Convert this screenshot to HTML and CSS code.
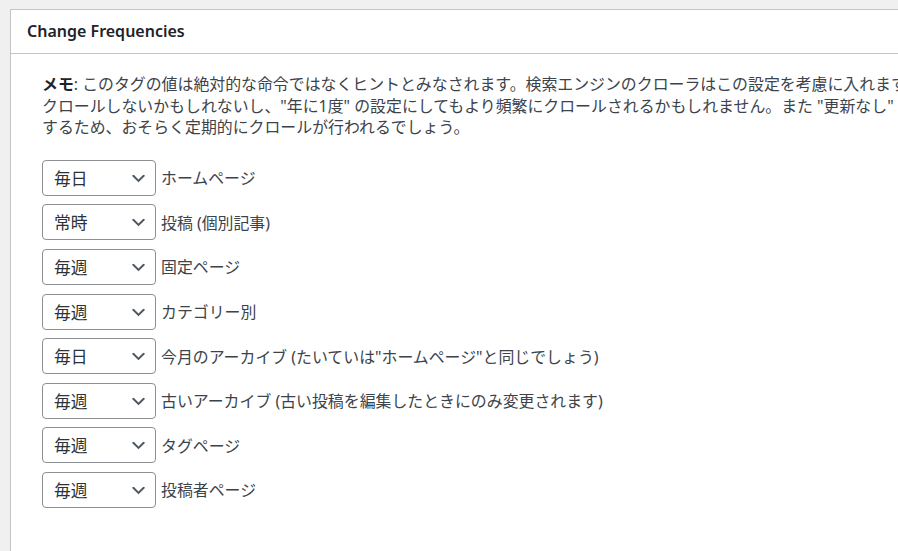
FILE: index.html
```html
<!DOCTYPE html>
<html lang="ja">
<head>
    <meta charset="UTF-8">
    <title>Change Frequencies</title>
    <link rel="stylesheet" href="styles.css">
</head>
<body>
    <!-- Обгортка сторінки налаштувань -->
    <div class="wrap">
        <div class="postbox">
            <h2 class="hndle">Change Frequencies</h2>

            <div class="inside">
                <p class="note"><b>メモ</b>: このタグの値は絶対的な命令ではなくヒントとみなされます。検索エンジンのクローラはこの設定を考慮に入れますが、"1時間おき" の設定にしてもその頻度で<br>クロールしないかもしれないし、"年に1度" の設定にしてもより頻繁にクロールされるかもしれません。また "更新なし" に設定されたページも、予期しない変更に対応<br>するため、おそらく定期的にクロールが行われるでしょう。</p>

                <!-- Список частот -->
                <ul class="freq-list">
                    <li>
                        <span class="select-wrap">
                            <select id="cf_home">
                                <option>常時</option><option>毎時</option><option selected>毎日</option><option>毎週</option><option>毎月</option><option>毎年</option><option>更新なし</option>
                            </select>
                            <svg class="chevron" viewBox="0 0 20 20"><path d="M5 6l5 5 5-5 2 1-7 7-7-7 2-1z"/></svg>
                        </span>
                        <label for="cf_home">ホームページ</label>
                    </li>
                    <li>
                        <span class="select-wrap">
                            <select id="cf_posts">
                                <option selected>常時</option><option>毎時</option><option>毎日</option><option>毎週</option><option>毎月</option><option>毎年</option><option>更新なし</option>
                            </select>
                            <svg class="chevron" viewBox="0 0 20 20"><path d="M5 6l5 5 5-5 2 1-7 7-7-7 2-1z"/></svg>
                        </span>
                        <label for="cf_posts">投稿 (個別記事)</label>
                    </li>
                    <li>
                        <span class="select-wrap">
                            <select id="cf_pages">
                                <option>常時</option><option>毎時</option><option>毎日</option><option selected>毎週</option><option>毎月</option><option>毎年</option><option>更新なし</option>
                            </select>
                            <svg class="chevron" viewBox="0 0 20 20"><path d="M5 6l5 5 5-5 2 1-7 7-7-7 2-1z"/></svg>
                        </span>
                        <label for="cf_pages">固定ページ</label>
                    </li>
                    <li>
                        <span class="select-wrap">
                            <select id="cf_cats">
                                <option>常時</option><option>毎時</option><option>毎日</option><option selected>毎週</option><option>毎月</option><option>毎年</option><option>更新なし</option>
                            </select>
                            <svg class="chevron" viewBox="0 0 20 20"><path d="M5 6l5 5 5-5 2 1-7 7-7-7 2-1z"/></svg>
                        </span>
                        <label for="cf_cats">カテゴリー別</label>
                    </li>
                    <li>
                        <span class="select-wrap">
                            <select id="cf_arch">
                                <option>常時</option><option>毎時</option><option selected>毎日</option><option>毎週</option><option>毎月</option><option>毎年</option><option>更新なし</option>
                            </select>
                            <svg class="chevron" viewBox="0 0 20 20"><path d="M5 6l5 5 5-5 2 1-7 7-7-7 2-1z"/></svg>
                        </span>
                        <label for="cf_arch">今月のアーカイブ (たいていは"ホームページ"と同じでしょう)</label>
                    </li>
                    <li>
                        <span class="select-wrap">
                            <select id="cf_old">
                                <option>常時</option><option>毎時</option><option>毎日</option><option selected>毎週</option><option>毎月</option><option>毎年</option><option>更新なし</option>
                            </select>
                            <svg class="chevron" viewBox="0 0 20 20"><path d="M5 6l5 5 5-5 2 1-7 7-7-7 2-1z"/></svg>
                        </span>
                        <label for="cf_old">古いアーカイブ (古い投稿を編集したときにのみ変更されます)</label>
                    </li>
                    <li>
                        <span class="select-wrap">
                            <select id="cf_tags">
                                <option>常時</option><option>毎時</option><option>毎日</option><option selected>毎週</option><option>毎月</option><option>毎年</option><option>更新なし</option>
                            </select>
                            <svg class="chevron" viewBox="0 0 20 20"><path d="M5 6l5 5 5-5 2 1-7 7-7-7 2-1z"/></svg>
                        </span>
                        <label for="cf_tags">タグページ</label>
                    </li>
                    <li>
                        <span class="select-wrap">
                            <select id="cf_auth">
                                <option>常時</option><option>毎時</option><option>毎日</option><option selected>毎週</option><option>毎月</option><option>毎年</option><option>更新なし</option>
                            </select>
                            <svg class="chevron" viewBox="0 0 20 20"><path d="M5 6l5 5 5-5 2 1-7 7-7-7 2-1z"/></svg>
                        </span>
                        <label for="cf_auth">投稿者ページ</label>
                    </li>
                </ul>
            </div>
        </div>
    </div>
</body>
</html>
```

FILE: styles.css
```css
/* Основний стиль сторінки */
body {
    margin: 0;
    background-color: #f0f0f1;
    color: #3c434a;
    font-family: "Noto Sans", "Noto Sans CJK JP", sans-serif;
    overflow: hidden;
}

.wrap {
    padding: 9px 0 0 10px;
}

/* Блок налаштувань */
.postbox {
    width: 1100px;
    min-height: 600px;
    background-color: #ffffff;
    border: 1px solid #c3c4c7;
}

.hndle {
    margin: 0;
    height: 43px;
    line-height: 43px;
    padding: 0 16px;
    border-bottom: 1px solid #c3c4c7;
    color: #1d2327;
    font-size: 16px;
    font-weight: 600;
}

.inside {
    padding: 20px 31px;
}

/* Примітка */
.note {
    margin: 0 0 21px;
    font-size: 15.9px;
    line-height: 21.6px;
    white-space: nowrap;
}

.note b {
    color: #1d2327;
}

/* Рядки з вибором частоти */
.freq-list {
    list-style: none;
    margin: 0;
    padding: 0;
    display: flex;
    flex-direction: column;
    gap: 8.6px;
}

.freq-list li {
    display: flex;
    align-items: center;
}

.select-wrap {
    position: relative;
    display: inline-block;
}

.select-wrap select {
    appearance: none;
    -webkit-appearance: none;
    display: block;
    width: 114px;
    height: 36px;
    margin: 0;
    padding: 0 28px 0 11px;
    border: 1px solid #8c8f94;
    border-radius: 4px;
    background-color: #ffffff;
    color: #2c3338;
    font-family: "Noto Sans CJK JP", sans-serif;
    font-size: 16.8px;
}

.select-wrap .chevron {
    position: absolute;
    right: 8px;
    top: 9px;
    width: 19px;
    height: 19px;
    fill: #50575e;
    pointer-events: none;
}

.freq-list label {
    margin-left: 5px;
    font-size: 15.9px;
}
```
